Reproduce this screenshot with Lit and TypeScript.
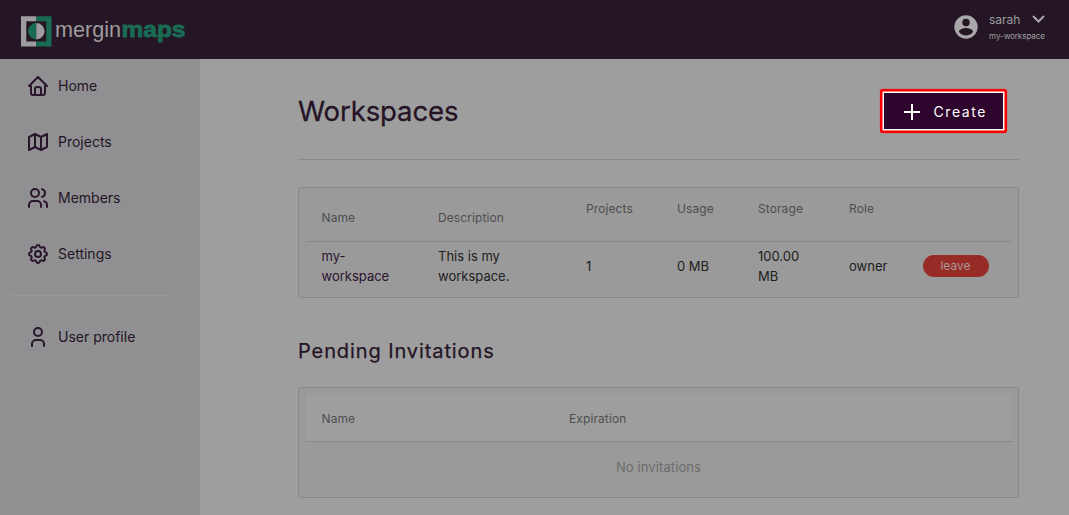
import { LitElement, html, css, svg } from "lit";
import { customElement } from "lit/decorators.js";

const icons = {
  home: svg`<path d="M5 12H3l9-9 9 9h-2M5 12v7a2 2 0 0 0 2 2h10a2 2 0 0 0 2-2v-7M9 21v-6a2 2 0 0 1 2-2h2a2 2 0 0 1 2 2v6"/>`,
  map: svg`<path d="M3 7l6-3 6 3 6-3v13l-6 3-6-3-6 3zM9 4v13M15 7v13"/>`,
  users: svg`<circle cx="9" cy="7" r="4"/><path d="M3 21v-2a4 4 0 0 1 4-4h4a4 4 0 0 1 4 4v2M16 3.13a4 4 0 0 1 0 7.75M21 21v-2a4 4 0 0 0-3-3.85"/>`,
  settings: svg`<path d="M10.325 4.317c.426-1.756 2.924-1.756 3.35 0a1.724 1.724 0 0 0 2.573 1.066c1.543-.94 3.31.826 2.37 2.37a1.724 1.724 0 0 0 1.065 2.572c1.756.426 1.756 2.924 0 3.35a1.724 1.724 0 0 0-1.066 2.573c.94 1.543-.826 3.31-2.37 2.37a1.724 1.724 0 0 0-2.572 1.065c-.426 1.756-2.924 1.756-3.35 0a1.724 1.724 0 0 0-2.573-1.066c-1.543.94-3.31-.826-2.37-2.37a1.724 1.724 0 0 0-1.065-2.572c-1.756-.426-1.756-2.924 0-3.35a1.724 1.724 0 0 0 1.066-2.573c-.94-1.543.826-3.31 2.37-2.37 1 .608 2.296.07 2.572-1.065z"/><circle cx="12" cy="12" r="3"/>`,
  user: svg`<circle cx="12" cy="7" r="4"/><path d="M6 21v-2a4 4 0 0 1 4-4h4a4 4 0 0 1 4 4v2"/>`,
};

@customElement("app-root")
export class AppRoot extends LitElement {
  static styles = css`
    :host {
      display: grid;
      grid-template-rows: 59px 456px;
      grid-template-columns: 200px 1fr;
      height: 515px;
      overflow: hidden;
      background: #9e9e9e;
      color: #241426;
      font-family: Inter, "Liberation Sans", sans-serif;
    }
    * { box-sizing: border-box; }
    svg { display: block; flex: none; }
    .top {
      grid-column: 1 / 3;
      background: #241624;
      display: flex;
      justify-content: space-between;
      padding: 0 23px 0 20px;
      color: #9f9c9f;
    }
    .account { display: flex; padding-top: 12px; }
    .avatar { margin: 1px 9px 0 0; }
    .who { width: 57px; }
    .line { display: flex; justify-content: space-between; height: 17px; }
    .line svg { margin-right: 1px; }
    .user { font-size: 12px; line-height: 16px; letter-spacing: 0; }
    .ws { font-size: 8.2px; line-height: 12px; margin-top: 1px; white-space: nowrap; letter-spacing: -0.15px; }
    .side { background: #909092; }
    .nav { display: flex; align-items: center; height: 56px; padding-left: 26px; gap: 8px; font-size: 14px; }
    .nav span { padding-bottom: 2px; }
    .nav:first-child { margin-top: -1px; }
    .rule { height: 1px; margin: 13px 28px 13px 10px; background: #979799; }
    .icon { fill: none; stroke: #2a162c; stroke-width: 2; stroke-linecap: round; stroke-linejoin: round; }
    .main { padding: 29px 50px 0 98px; }
    .head {
      height: 72px;
      border-bottom: 1px solid #8a8a8a;
      display: flex;
      justify-content: space-between;
      align-items: flex-start;
      padding-right: 12px;
    }
    h1 { margin: 6px 0 0; font-weight: 400; font-size: 27.5px; line-height: 34px; letter-spacing: -0.1px; -webkit-text-stroke: 0.3px #241426; }
    h2 { margin: 40px 0 0; font-weight: 400; font-size: 20px; line-height: 26px; letter-spacing: 0.9px; -webkit-text-stroke: 0.25px #241426; }
    .create {
      width: 127px;
      height: 44px;
      margin-top: 1px;
      padding: 1px 0 0 18.5px;
      display: flex;
      align-items: center;
      gap: 11px;
      font: 400 14px Inter, sans-serif;
      letter-spacing: 1.6px;
      color: #fff;
      background: #2d052d;
      border: 2px solid #f00;
      border-radius: 3px;
      box-shadow: inset 0 0 0 0.5px #f00, inset 0 0 0 2px #fff, 0 0 1px #f00;
    }
    .create span { padding-bottom: 1px; }
    .card { border: 1px solid #888; border-radius: 3px; background: #9a9a9a; height: 111px; padding: 6px 6px 0 7px; }
    .first { margin-top: 27px; }
    .second { margin-top: 23px; }
    .row { display: grid; align-items: center; }
    .row > * { padding-left: 15.5px; }
    .ws-row { grid-template-columns: 116.5px 148px 91px 81px 91px 73.5px 1fr; }
    .th { height: 48px; border-bottom: 1px solid #888; font-size: 12px; color: #4e4e4e; letter-spacing: 0.1px; }
    .low { padding-bottom: 0; }
    .high { padding-bottom: 19px; }
    .td { height: 48px; font-size: 13px; line-height: 20px; color: #202020; letter-spacing: 0; }
    .name { color: #2d1230; }
    .leave {
      display: block; width: 66px; height: 22px; padding: 0; border: 0; border-radius: 11px;
      background: #972b25; color: #a99a9a; font: 12px/22px Inter, sans-serif; letter-spacing: 0;
    }
    .inv-row { grid-template-columns: 247.5px 1fr; background: #9e9e9e; }
    .inv-row span { padding-top: 2px; }
    .empty { text-align: center; font-size: 13px; line-height: 20px; padding: 15px 1px 0 0; color: #6c6c6c; letter-spacing: 0.1px; }
    .light { font: 22px "Liberation Sans", sans-serif; fill: #9f9c9f; }
    .bold { font: bold 22px "Liberation Sans", sans-serif; fill: #196b54; stroke: #196b54; stroke-width: 0.8; }
  `;

  private nav(icon: keyof typeof icons, label: string) {
    return html`<div class="nav"><svg class="icon" width="24" height="24" viewBox="0 0 24 24">${icons[icon]}</svg><span>${label}</span></div>`;
  }

  render() {
    return html`
      <header class="top">
        <svg width="170" height="59" viewBox="20 0 170 59">
          <path fill="#9f9c9f" d="M21 16.3h15.3v5H26.3v20.2h10v5H21z"/>
          <path fill="#196b54" d="M36.3 16.3h15.2v30.2H36.3v-5h10V21.3h-10z"/>
          <path fill="#196b54" d="M36.3 23.1a8.2 8.2 0 0 0 0 16.4z"/>
          <path fill="#9f9c9f" d="M36.3 23.1a8.2 8.2 0 0 1 0 16.4z"/>
          <text class="light" x="55" y="37.3" textLength="66" lengthAdjust="spacingAndGlyphs">mergin</text>
          <text class="bold" x="121.500" y="37.3" textLength="64" lengthAdjust="spacingAndGlyphs">maps</text>
        </svg>
        <div class="account">
          <svg class="avatar" width="28" height="28" viewBox="0 0 24 24"><path fill="#aaa7aa" d="M12 2a10 10 0 1 0 0 20 10 10 0 0 0 0-20zm0 3a3.2 3.2 0 1 1 0 6.4A3.2 3.2 0 0 1 12 5zm0 14.2a7.2 7.2 0 0 1-6-3.2c.03-2 4-3.1 6-3.1s5.970 1.100 6 3.100a7.200 7.200 0 0 1-6 3.200z"/></svg>
          <div class="who">
            <div class="line">
              <span class="user">sarah</span>
              <svg width="14" height="14" viewBox="0 0 14 14"><path d="M2 4l5.500 5.500L13 4" fill="none" stroke="#aaa7aa" stroke-width="2"/></svg>
            </div>
            <div class="ws">my-workspace</div>
          </div>
        </div>
      </header>
      <nav class="side">
        ${this.nav("home", "Home")}
        ${this.nav("map", "Projects")}
        ${this.nav("users", "Members")}
        ${this.nav("settings", "Settings")}
        <div class="rule"></div>
        ${this.nav("user", "User profile")}
      </nav>
      <main class="main">
        <div class="head">
          <h1>Workspaces</h1>
          <button class="create">
            <svg width="22" height="22" viewBox="0 0 22 22"><path d="M11 3v16M3 11h16" stroke="#fff" stroke-width="2"/></svg>
            <span>Create</span>
          </button>
        </div>
        <section class="card first">
          <div class="row ws-row th">
            <span class="low">Name</span><span class="low">Description</span>
            <span class="high">Projects</span><span class="high">Usage</span>
            <span class="high">Storage</span><span class="high">Role</span><span></span>
          </div>
          <div class="row ws-row td">
            <span class="name">my-<br>workspace</span><span>This is my<br>workspace.</span>
            <span>1</span><span>0 MB</span><span>100.00<br>MB</span><span>owner</span>
            <div><button class="leave">leave</button></div>
          </div>
        </section>
        <h2>Pending Invitations</h2>
        <section class="card second">
          <div class="row inv-row th"><span>Name</span><span>Expiration</span></div>
          <div class="empty">No invitations</div>
        </section>
      </main>
    `;
  }
}
